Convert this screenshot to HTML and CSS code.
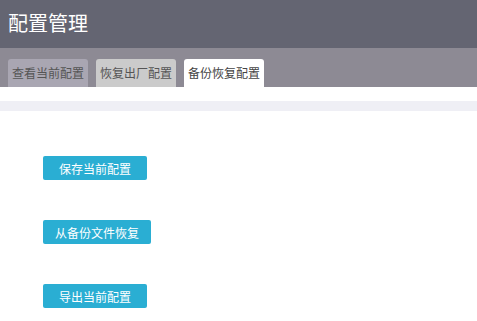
FILE: index.html
```html
<!DOCTYPE html>
<html lang="zh-CN">

<head>
    <meta charset="UTF-8">
    <meta name="viewport" content="width=device-width, initial-scale=1.0">
    <title>配置管理</title>
    <link rel="stylesheet" href="styles.css">
</head>

<body>
    <div class="cabecalho">
        <h1>配置管理</h1>
    </div>
    <div class="abas">
        <div class="aba aba-escura">查看当前配置</div>
        <div class="aba aba-clara">恢复出厂配置</div>
        <div class="aba ativa">备份恢复配置</div>
    </div>
    <div class="espaco"></div>
    <div class="faixa"></div>
    <div class="conteudo">
        <button class="botao">保存当前配置</button>
        <button class="botao">从备份文件恢复</button>
        <button class="botao">导出当前配置</button>
    </div>
</body>

</html>
```

FILE: styles.css
```css
body {
    margin: 0;
    font-family: "Noto Sans CJK SC", "Noto Sans", sans-serif;
    background-color: #fff;
}

.cabecalho {
    height: 48px;
    background-color: #646572;
    display: flex;
    align-items: center;
    padding-left: 8px;
}

.cabecalho h1 {
    margin: 0 0 3px;
    font-size: 20px;
    font-weight: normal;
    color: #fff;
}

.abas {
    height: 28px;
    padding: 11px 8px 0;
    background-color: #8d8a94;
    display: flex;
    gap: 8px;
}

.aba {
    width: 80px;
    height: 28px;
    line-height: 28px;
    text-align: center;
    font-size: 12px;
    color: #555;
    border-radius: 3px 3px 0 0;
}

.aba-escura {
    background-color: #a9a6b2;
}

.aba-clara {
    background-color: #cbcbcb;
}

.ativa {
    background-color: #fff;
    color: #444;
}

.espaco {
    height: 14px;
}

.faixa {
    height: 10px;
    background-color: #efeff5;
}

.conteudo {
    padding: 45px 0 0 43px;
    display: flex;
    flex-direction: column;
    align-items: flex-start;
    gap: 40px;
}

.botao {
    min-width: 104px;
    height: 24px;
    padding: 0 12px;
    border: none;
    border-radius: 2px;
    background-color: #2aaed3;
    color: #fff;
    font-family: inherit;
    font-size: 12px;
    cursor: pointer;
}
```
